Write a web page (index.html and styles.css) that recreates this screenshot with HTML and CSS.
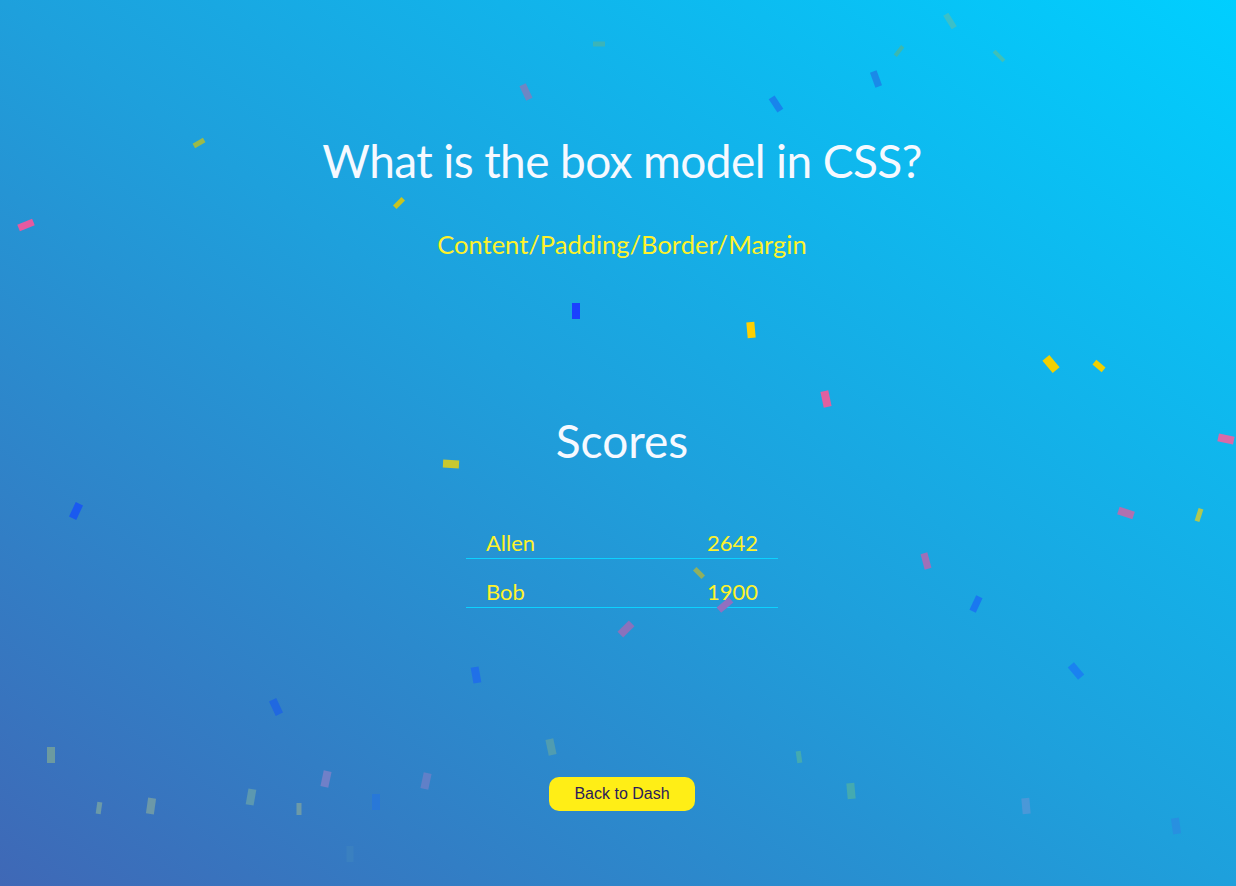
FILE: index.html
```html
<!DOCTYPE html>
<html lang="en">
<head>
<meta charset="utf-8">
<title>Scores</title>
<link rel="stylesheet" href="styles.css">
</head>
<body>
<main class="page">
  <h1 class="question">What is the box model in CSS?</h1>
  <p class="answer">Content/Padding/Border/Margin</p>
  <h2 class="scores-title">Scores</h2>
  <div class="scores">
    <div class="row"><span class="name">Allen</span><span class="pts">2642</span></div>
    <div class="row"><span class="name">Bob</span><span class="pts">1900</span></div>
  </div>
  <button class="back">Back to Dash</button>
</main>
<svg class="confetti" width="1236" height="886" viewBox="0 0 1236 886" aria-hidden="true">
  <rect x="-6" y="-2.5" width="12" height="5" fill="#3cb4b8" transform="translate(599 44)"/>
  <rect x="-3.5" y="-8" width="7" height="16" fill="#6e86c4" transform="translate(526 92) rotate(-25)"/>
  <rect x="-3.5" y="-8" width="7" height="16" fill="#1884ec" transform="translate(776 104) rotate(-33)"/>
  <rect x="-3.5" y="-8" width="7" height="16" fill="#1a8ae8" transform="translate(876 79) rotate(-20)"/>
  <rect x="-6" y="-2" width="12" height="4" fill="#3cb8b0" transform="translate(899 51) rotate(-52)"/>
  <rect x="-3" y="-8" width="6" height="16" fill="#3cc0c8" transform="translate(950 21) rotate(-32)"/>
  <rect x="-7" y="-2" width="14" height="4" fill="#40c0b8" transform="translate(999 56) rotate(45)"/>
  <rect x="-6" y="-2.5" width="12" height="5" fill="#9cba48" transform="translate(199 143) rotate(-30)"/>
  <rect x="-8" y="-3.5" width="16" height="7" fill="#e65aa0" transform="translate(26 225) rotate(-22)"/>
  <rect x="-6" y="-2.5" width="12" height="5" fill="#c8c420" transform="translate(399 203) rotate(-45)"/>
  <rect x="-4" y="-8" width="8" height="16" fill="#1a40ff" transform="translate(576 311)"/>
  <rect x="-4" y="-8" width="8" height="16" fill="#ffd000" transform="translate(751 330) rotate(-5)"/>
  <rect x="-4" y="-8" width="8" height="16" fill="#e060a0" transform="translate(826 399) rotate(-12)"/>
  <rect x="-8" y="-4" width="16" height="8" fill="#c8c830" transform="translate(451 464) rotate(3)"/>
  <rect x="-8" y="-4.5" width="16" height="9" fill="#f2d000" transform="translate(1051 364) rotate(50)"/>
  <rect x="-6" y="-3" width="12" height="6" fill="#f2d000" transform="translate(1099 366) rotate(40)"/>
  <rect x="-8" y="-4" width="16" height="8" fill="#d86aa8" transform="translate(1226 439) rotate(12)"/>
  <rect x="-8" y="-4" width="16" height="8" fill="#b070b0" transform="translate(1126 513) rotate(18)"/>
  <rect x="-2.5" y="-6.5" width="5" height="13" fill="#b0c850" transform="translate(1199 515) rotate(18)"/>
  <rect x="-3.5" y="-8" width="7" height="16" fill="#a070b8" transform="translate(926 561) rotate(-15)"/>
  <rect x="-3.5" y="-8" width="7" height="16" fill="#1a78f0" transform="translate(976 604) rotate(25)"/>
  <rect x="-4" y="-8" width="8" height="16" fill="#1a82f0" transform="translate(1076 671) rotate(-40)"/>
  <rect x="-4" y="-8" width="8" height="16" fill="#44aab0" transform="translate(851 791) rotate(-5)"/>
  <rect x="-4" y="-8" width="8" height="16" fill="#4a98d8" transform="translate(1026 806) rotate(-5)"/>
  <rect x="-4" y="-8" width="8" height="16" fill="#2890e0" transform="translate(1176 826) rotate(-8)"/>
  <rect x="-4" y="-8" width="8" height="16" fill="#1a5af0" transform="translate(76 511) rotate(25)"/>
  <rect x="-6" y="-2.5" width="12" height="5" fill="#90b060" transform="translate(699 573) rotate(45)"/>
  <rect x="-8" y="-3.5" width="16" height="7" fill="#9070c0" transform="translate(725 605) rotate(-40)"/>
  <rect x="-8" y="-4" width="16" height="8" fill="#8a72bc" transform="translate(626 629) rotate(-45)"/>
  <rect x="-4" y="-8" width="8" height="16" fill="#2070e8" transform="translate(476 675) rotate(-10)"/>
  <rect x="-4" y="-8" width="8" height="16" fill="#509cb0" transform="translate(551 747) rotate(-12)"/>
  <rect x="-2.5" y="-6" width="5" height="12" fill="#44aab0" transform="translate(799 757) rotate(-8)"/>
  <rect x="-4" y="-8" width="8" height="16" fill="#6080c8" transform="translate(426 781) rotate(12)"/>
  <rect x="-4" y="-8" width="8" height="16" fill="#2068e0" transform="translate(276 707) rotate(-25)"/>
  <rect x="-4" y="-8" width="8" height="16" fill="#6c9aa0" transform="translate(51 755)"/>
  <rect x="-2.5" y="-6" width="5" height="12" fill="#6c9aa8" transform="translate(99 808) rotate(8)"/>
  <rect x="-4" y="-8" width="8" height="16" fill="#6c98a8" transform="translate(151 806) rotate(8)"/>
  <rect x="-4" y="-8" width="8" height="16" fill="#5c98b0" transform="translate(251 797) rotate(10)"/>
  <rect x="-2.5" y="-6" width="5" height="12" fill="#6c9aa8" transform="translate(299 809)"/>
  <rect x="-4" y="-8" width="8" height="16" fill="#7080c8" transform="translate(326 779) rotate(12)"/>
  <rect x="-4" y="-8" width="8" height="16" fill="#2878d8" transform="translate(376 802)"/>
  <rect x="-3.5" y="-8" width="7" height="16" fill="#3a80c0" transform="translate(350 854)"/>
</svg>
</body>
</html>
```

FILE: styles.css
```css
html, body {
  margin: 0;
  padding: 0;
}

body {
  position: relative;
  width: 1236px;
  height: 886px;
  overflow: hidden;
  background: linear-gradient(to top right, #3f68b6 0%, #1ea0dc 50%, #00cfff 100%);
  font-family: Lato, "Open Sans", sans-serif;
}

.page {
  display: flex;
  flex-direction: column;
  align-items: center;
  padding: 132px 0 0 8px;
}

.question {
  margin: 0;
  font-size: 46px;
  line-height: 58px;
  font-weight: 400;
  letter-spacing: -0.6px;
  color: #f6f9ff;
}

.answer {
  margin: 38px 0 0;
  font-size: 25.5px;
  line-height: 32px;
  color: #fff22a;
}

.scores-title {
  margin: 152px 0 0;
  font-size: 46px;
  line-height: 58px;
  font-weight: 400;
  color: #f6f9ff;
}

.scores {
  margin-top: 40px;
  width: 312px;
  display: flex;
  flex-direction: column;
}

.row {
  display: flex;
  justify-content: space-between;
  padding: 20px 20px 2px;
  font-size: 22px;
  line-height: 26px;
  color: #fff22a;
  border-bottom: 1px solid #0cd2ff;
}

.back {
  margin-top: 169px;
  width: 146px;
  height: 34px;
  padding: 0;
  border: none;
  border-radius: 10px;
  background: #ffee16;
  color: #2b1b5a;
  font-family: "Liberation Sans", Arial, sans-serif;
  font-size: 16px;
}

.confetti {
  position: absolute;
  left: 0;
  top: 0;
  pointer-events: none;
}
```
